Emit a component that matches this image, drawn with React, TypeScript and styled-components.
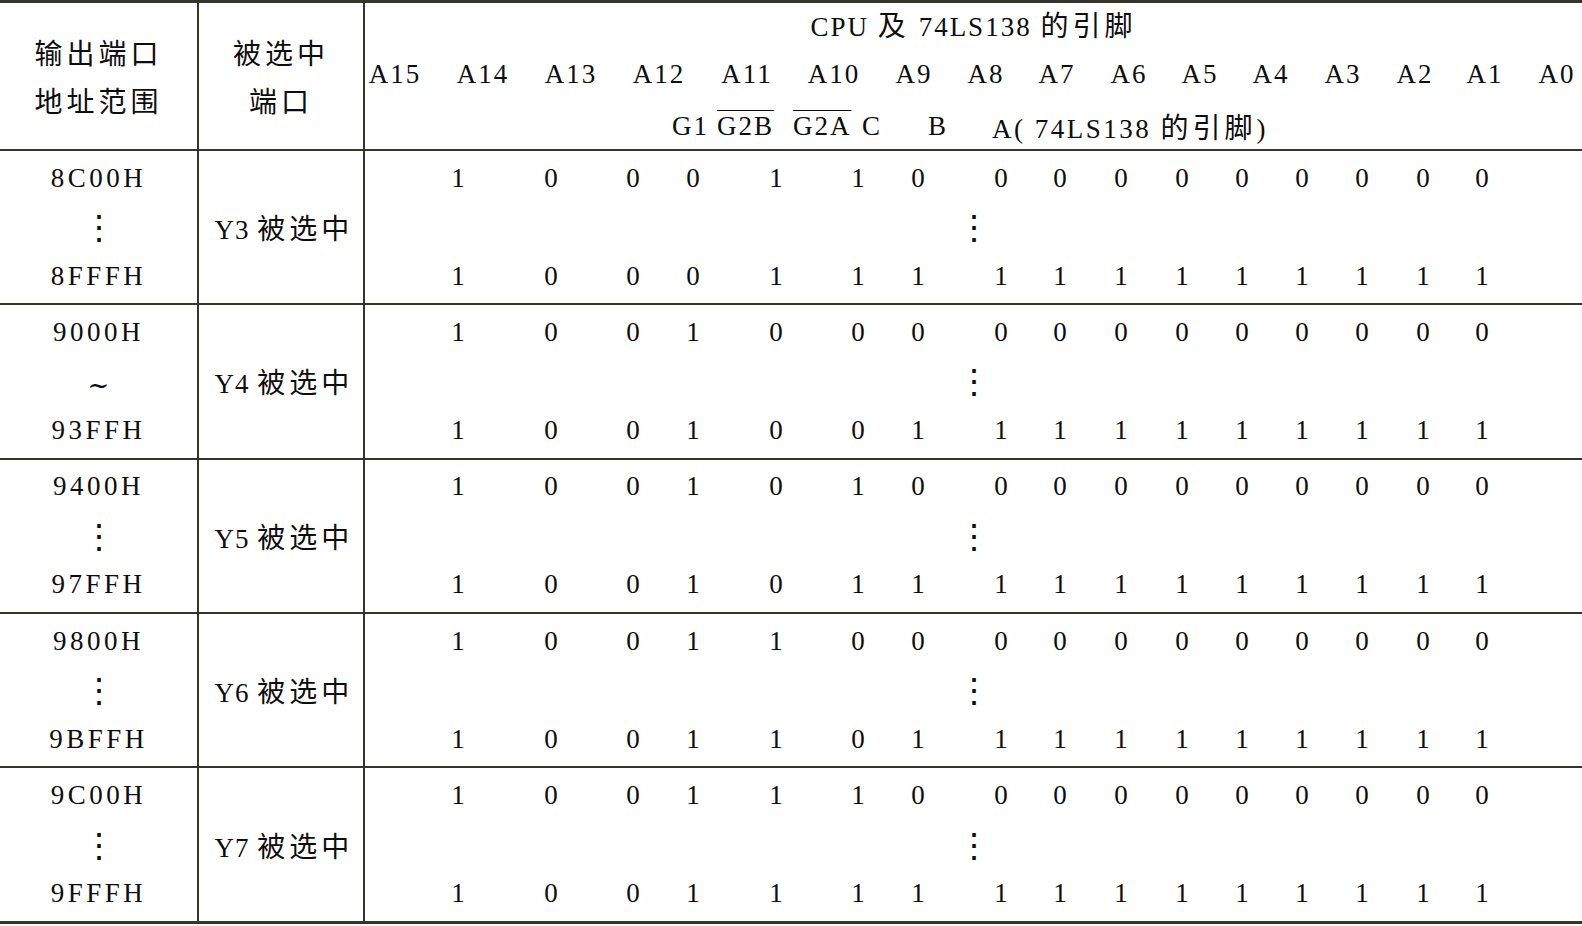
import styled, { createGlobalStyle } from "styled-components";

const LINE = "#35352b";

const GlobalStyle = createGlobalStyle`
  *, *::before, *::after { box-sizing: border-box; }
  html, body { margin: 0; padding: 0; background: #fff; }
  body {
    font-family: "Liberation Serif", "Times New Roman", "Noto Sans CJK SC", serif;
    font-size: 27px;
    color: #0d0d0d;
    letter-spacing: 2px;
  }
`;

// column centres inside the third column, measured from its left edge
const headCenters = [30, 118, 206, 294, 382, 469, 549, 621, 692, 764, 835, 906, 978, 1050, 1120, 1192];
const bitCenters = [94, 187, 269, 329, 412, 494, 554, 637, 696, 757, 818, 878, 938, 998, 1059, 1118];
const pinStarts = [307, 352, 428, 497, 563, 627];

const tracks = (xs: number[]) =>
  xs.slice(1).map((x, i) => `${x - xs[i]}px`).join(" ") + " 0px";

const groups = [
  { from: "8C00H", mid: "dots", to: "8FFFH", port: "Y3" },
  { from: "9000H", mid: "tilde", to: "93FFH", port: "Y4" },
  { from: "9400H", mid: "dots", to: "97FFH", port: "Y5" },
  { from: "9800H", mid: "dots", to: "9BFFH", port: "Y6" },
  { from: "9C00H", mid: "dots", to: "9FFFH", port: "Y7" },
];

const bits = (hex: string) =>
  parseInt(hex.replace("H", ""), 16).toString(2).padStart(16, "0").split("");

export default function App() {
  return (
    <>
      <GlobalStyle />
      <Table>
        <Row $h={148}>
          <Cell>
            <Line $h={48}><Han>输出端口</Han></Line>
            <Line $h={48}><Han>地址范围</Han></Line>
          </Cell>
          <Cell>
            <Line $h={48}><Han>被选中</Han></Line>
            <Line $h={48}><Han>端口</Han></Line>
          </Cell>
          <HeadPins>
            <Title>
              <span>
                CPU <Han>及</Han> 74LS138 <Han>的引脚</Han>
              </span>
            </Title>
            <Slots $pad={headCenters[0]} $cols={tracks(headCenters)}>
              {headCenters.map((_, i) => (
                <Slot key={i}>A{15 - i}</Slot>
              ))}
            </Slots>
            <Pins $pad={pinStarts[0]} $cols={tracks(pinStarts)}>
              <span>G1</span>
              <Bar>G2B</Bar>
              <Bar>G2A</Bar>
              <span>C</span>
              <span>B</span>
              <Note>
                A( 74LS138 <Han>的引脚</Han>)
              </Note>
            </Pins>
          </HeadPins>
        </Row>

        {groups.map((g, gi) => (
          <Row key={g.from} $h={gi === groups.length - 1 ? 153 : 154.3} $last={gi === groups.length - 1}>
            <Cell>
              <Line $h={49}><Addr>{g.from}</Addr></Line>
              <Line $h={49}>{g.mid === "dots" ? <Dots>⋮</Dots> : <Tilde>~</Tilde>}</Line>
              <Line $h={49}><Addr>{g.to}</Addr></Line>
            </Cell>
            <Cell>
              <Line $h={49}>
                <Port>
                  {g.port} <Han>被选中</Han>
                </Port>
              </Line>
            </Cell>
            <BitBlock>
              <Slots $pad={bitCenters[0]} $cols={tracks(bitCenters)}>
                {bits(g.from).map((b, i) => (
                  <Slot key={i}>{b}</Slot>
                ))}
              </Slots>
              <Centered><Dots>⋮</Dots></Centered>
              <Slots $pad={bitCenters[0]} $cols={tracks(bitCenters)}>
                {bits(g.to).map((b, i) => (
                  <Slot key={i}>{b}</Slot>
                ))}
              </Slots>
            </BitBlock>
          </Row>
        ))}
      </Table>
    </>
  );
}

const Table = styled.div`
  width: 1582px;
  border-top: 3px solid ${LINE};
  border-bottom: 3px solid ${LINE};
`;

const Row = styled.div<{ $h: number; $last?: boolean }>`
  display: grid;
  grid-template-columns: 199px 166px 1fr;
  height: ${(p) => p.$h}px;
  border-bottom: ${(p) => (p.$last ? "none" : `2px solid ${LINE}`)};
`;

const Cell = styled.div`
  display: flex;
  flex-direction: column;
  justify-content: center;
  align-items: center;
  border-right: 2px solid ${LINE};
`;

const Line = styled.div<{ $h: number }>`
  height: ${(p) => p.$h}px;
  display: flex;
  align-items: center;
  justify-content: center;
  white-space: pre;
`;

const Han = styled.span`
  font-family: "Noto Sans CJK SC", sans-serif;
  font-weight: 400;
  font-size: 28px;
  letter-spacing: 4px;
`;

const Addr = styled.span`
  letter-spacing: 3.5px;
`;

const Port = styled.span`
  letter-spacing: 1px;
  padding-left: 6px;
`;

const Note = styled.span`
  letter-spacing: 2.5px;
`;

const Dots = styled.span`
  font-family: "DejaVu Serif", serif;
  font-size: 34px;
  letter-spacing: 0;
  line-height: 1;
`;

const Tilde = styled.span`
  font-family: "DejaVu Serif", serif;
  font-size: 26px;
  letter-spacing: 0;
  line-height: 1;
  transform: translateY(4px);
`;

const HeadPins = styled.div`
  display: grid;
  grid-template-rows: 42px 58px 46px;
`;

const Title = styled.div`
  display: flex;
  align-items: center;
  justify-content: center;
  white-space: pre;
`;

const Slots = styled.div<{ $pad: number; $cols: string }>`
  display: grid;
  grid-template-columns: ${(p) => p.$cols};
  padding-left: ${(p) => p.$pad}px;
  align-items: center;
`;

const Slot = styled.div`
  width: 0;
  display: flex;
  justify-content: center;
  white-space: nowrap;
`;

const Pins = styled.div<{ $pad: number; $cols: string }>`
  display: grid;
  grid-template-columns: ${(p) => p.$cols};
  padding-left: ${(p) => p.$pad}px;
  align-items: center;
  white-space: pre;
`;

const Bar = styled.span`
  text-decoration: overline;
  text-decoration-thickness: 1px;
`;

const BitBlock = styled.div`
  display: grid;
  grid-template-rows: 49px 49px 49px;
  align-content: center;
`;

const Centered = styled.div`
  display: flex;
  align-items: center;
  justify-content: center;
`;
